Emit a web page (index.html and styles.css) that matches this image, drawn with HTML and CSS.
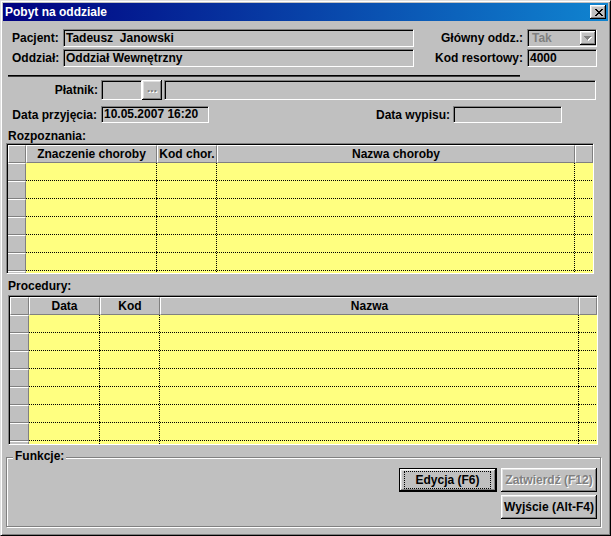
FILE: index.html
```html
<!DOCTYPE html>
<html lang="pl">
<head>
<meta charset="utf-8">
<title>Pobyt na oddziale</title>
<link rel="stylesheet" href="styles.css">
</head>
<body>
<div class="window">
  <div class="titlebar">
    <span class="title">Pobyt na oddziale</span>
    <span class="close-btn"><svg width="8" height="7" viewBox="0 0 8 7" shape-rendering="crispEdges"><path fill="#000" d="M0 0h2v1H0zM6 0h2v1H6zM1 1h2v1H1zM5 1h2v1H5zM2 2h4v1H2zM3 3h2v1H3zM2 4h4v1H2zM1 5h2v1H1zM5 5h2v1H5zM0 6h2v1H0zM6 6h2v1H6z"/></svg></span>
  </div>

  <div class="top">
    <span class="lbl">Pacjent:</span>
    <div class="field">Tadeusz  Janowski</div>
    <span class="lbl right">Główny oddz.:</span>
    <div class="combo">
      <span class="combo-text">Tak</span>
      <span class="combo-btn"><svg width="8" height="5" viewBox="0 0 8 5" shape-rendering="crispEdges"><path fill="#fff" d="M1 1h7v1H1zM2 2h5v1H2zM3 3h3v1H3zM4 4h1v1H4z"/><path fill="#808080" d="M0 0h7v1H0zM1 1h5v1H1zM2 2h3v1H2zM3 3h1v1H3z"/></svg></span>
    </div>
    <span class="lbl">Oddział:</span>
    <div class="field">Oddział Wewnętrzny</div>
    <span class="lbl right">Kod resortowy:</span>
    <div class="field">4000</div>
  </div>

  <div class="sep"></div>

  <div class="row payer">
    <span class="lbl col-lbl">Płatnik:</span>
    <div class="field f-code"></div>
    <span class="btn btn-dots"><span class="dis">...</span></span>
    <div class="field f-name"></div>
  </div>

  <div class="row dates">
    <span class="lbl col-lbl date-lbl">Data przyjęcia:</span>
    <div class="field f-date">10.05.2007 16:20</div>
    <span class="lbl out-lbl">Data wypisu:</span>
    <div class="field f-date2"></div>
  </div>

  <div class="section-lbl">Rozpoznania:</div>
  <div class="grid g1">
    <div class="grid-in g1-cols">
      <div class="h"></div><div class="h">Znaczenie choroby</div><div class="h">Kod chor.</div><div class="h">Nazwa choroby</div><div class="h"></div>
      <div class="ind"></div><div class="c"></div><div class="c"></div><div class="c"></div><div class="c last"></div>
      <div class="ind"></div><div class="c"></div><div class="c"></div><div class="c"></div><div class="c last"></div>
      <div class="ind"></div><div class="c"></div><div class="c"></div><div class="c"></div><div class="c last"></div>
      <div class="ind"></div><div class="c"></div><div class="c"></div><div class="c"></div><div class="c last"></div>
      <div class="ind"></div><div class="c"></div><div class="c"></div><div class="c"></div><div class="c last"></div>
      <div class="ind"></div><div class="c"></div><div class="c"></div><div class="c"></div><div class="c last"></div>
      <div class="ind"></div><div class="c"></div><div class="c"></div><div class="c"></div><div class="c last"></div>
    </div>
  </div>

  <div class="section-lbl s2">Procedury:</div>
  <div class="grid g2">
    <div class="grid-in g2-cols">
      <div class="h"></div><div class="h">Data</div><div class="h">Kod</div><div class="h">Nazwa</div><div class="h"></div>
      <div class="ind"></div><div class="c"></div><div class="c"></div><div class="c"></div><div class="c last"></div>
      <div class="ind"></div><div class="c"></div><div class="c"></div><div class="c"></div><div class="c last"></div>
      <div class="ind"></div><div class="c"></div><div class="c"></div><div class="c"></div><div class="c last"></div>
      <div class="ind"></div><div class="c"></div><div class="c"></div><div class="c"></div><div class="c last"></div>
      <div class="ind"></div><div class="c"></div><div class="c"></div><div class="c"></div><div class="c last"></div>
      <div class="ind"></div><div class="c"></div><div class="c"></div><div class="c"></div><div class="c last"></div>
      <div class="ind"></div><div class="c"></div><div class="c"></div><div class="c"></div><div class="c last"></div>
      <div class="ind"></div><div class="c"></div><div class="c"></div><div class="c"></div><div class="c last"></div>
    </div>
  </div>

  <div class="group">
    <span class="group-title">Funkcje:</span>
    <div class="buttons">
      <span class="btn btn-default"><span class="focus">Edycja (F6)</span></span>
      <span class="btn"><span class="dis">Zatwierdź (F12)</span></span>
      <span class="btn btn-exit">Wyjście (Alt-F4)</span>
    </div>
  </div>
</div>
</body>
</html>
```

FILE: styles.css
```css
* { box-sizing: border-box; }

html, body {
  margin: 0;
  padding: 0;
}

body {
  width: 611px;
  height: 536px;
  overflow: hidden;
  background: #c0c0c0;
  font-family: "Liberation Sans", Arial, sans-serif;
  font-size: 12px;
  font-weight: bold;
  color: #000;
}

.window {
  width: 611px;
  height: 536px;
  border: 1px solid;
  border-color: #dfdfdf #000 #000 #dfdfdf;
  box-shadow: inset 1px 1px #fff, inset -1px -1px #808080;
  padding: 2px;
  background: #c0c0c0;
}

.titlebar {
  height: 18px;
  display: flex;
  align-items: center;
  justify-content: space-between;
  padding: 0 2px 0 2px;
  background: linear-gradient(90deg, #000080, #1084d0);
  color: #fff;
}

.title {
  line-height: 18px;
}

.close-btn {
  width: 16px;
  height: 14px;
  display: flex;
  align-items: center;
  justify-content: center;
  padding-left: 1px;
  background: #c0c0c0;
  box-shadow: inset -1px -1px #000, inset 1px 1px #fff, inset -2px -2px #808080, inset 2px 2px #dfdfdf;
}

.close-btn svg { display: block; }

/* top block */
.top {
  display: grid;
  grid-template-columns: 51px 351px 113px 70px;
  grid-template-rows: 18px 18px;
  row-gap: 2px;
  align-items: center;
  margin: 8px 0 0 9px;
}

.lbl {
  white-space: nowrap;
  line-height: 14px;
}

.lbl.right {
  text-align: right;
  padding-right: 4px;
}

.field {
  height: 18px;
  background: #c0c0c0;
  border: 1px solid;
  border-color: #808080 #fff #fff #808080;
  box-shadow: inset 1px 1px #000;
  padding: 0 0 0 2px;
  line-height: 16px;
  white-space: pre;
  overflow: hidden;
}

.combo {
  height: 18px;
  display: flex;
  align-items: stretch;
  border: 1px solid;
  border-color: #808080 #fff #fff #808080;
  box-shadow: inset 1px 1px #000;
  padding: 1px 1px 1px 1px;
}

.combo-text {
  flex: 1;
  color: #808080;
  padding-left: 3px;
  line-height: 14px;
}

.combo-btn {
  width: 16px;
  margin: 0 -1px 0 0;
  display: flex;
  align-items: center;
  justify-content: center;
  padding-top: 1px;
  background: #c0c0c0;
  box-shadow: inset -1px -1px #000, inset 1px 1px #fff, inset -2px -2px #808080, inset 2px 2px #dfdfdf;
}

.combo-btn svg { display: block; }

.sep {
  margin: 8px 0 0 5px;
  width: 512px;
  height: 2px;
  border-top: 1px solid #000;
  border-bottom: 1px solid #404040;
}

.row {
  display: flex;
  align-items: center;
}

.payer {
  height: 20px;
  margin-top: 3px;
}

.col-lbl {
  width: 95px;
  text-align: right;
}

.date-lbl {
  padding-right: 1px;
}

.f-code {
  margin-left: 3px;
  width: 41px;
  height: 20px;
}

.btn-dots {
  width: 20px;
  height: 20px;
  align-items: flex-end;
  padding-bottom: 4px;
}

.f-name {
  margin-left: 2px;
  width: 432px;
  height: 20px;
}

.dates {
  height: 17px;
  margin-top: 6px;
}

.f-date {
  margin-left: 3px;
  width: 108px;
  height: 17px;
  line-height: 15px;
}

.out-lbl {
  width: 241px;
  text-align: right;
}

.f-date2 {
  margin-left: 3px;
  width: 109px;
  height: 17px;
}

.section-lbl {
  margin: 6px 0 0 5px;
  height: 14px;
  line-height: 14px;
}

.section-lbl.s2 {
  margin-top: 5px;
}

/* grids */
.grid {
  border: 1px solid;
  border-color: #808080 #fff #fff #808080;
  overflow: hidden;
}

.g1 {
  margin-left: 3px;
  width: 588px;
  height: 131px;
}

.g2 {
  margin: 2px 0 0 5px;
  width: 590px;
  height: 150px;
}

.grid-in {
  height: 100%;
  border-top: 1px solid #000;
  border-left: 1px solid #000;
  background: #ffff80;
  display: grid;
  grid-auto-rows: 18px;
  overflow: hidden;
}

.g1-cols { grid-template-columns: 18px 131px 60px 358px 18px; }
.g2-cols { grid-template-columns: 19px 71px 60px 419px 18px; }

.h {
  background: #c0c0c0;
  border-top: 1px solid #fff;
  border-left: 1px solid #fff;
  border-right: 1px solid #808080;
  border-bottom: 1px solid #808080;
  text-align: center;
  line-height: 16px;
  white-space: nowrap;
  overflow: hidden;
}

.ind {
  background: #c0c0c0;
  border-top: 1px solid #fff;
  border-right: 1px solid #808080;
  border-bottom: 1px solid #808080;
}

.c {
  background:
    linear-gradient(90deg, #000 50%, transparent 50%) left bottom / 2px 1px repeat-x,
    linear-gradient(180deg, #000 50%, transparent 50%) right top / 1px 2px repeat-y;
}

.c.last {
  background: linear-gradient(90deg, #000 50%, transparent 50%) left bottom / 2px 1px repeat-x;
}

/* group box */
.group {
  position: relative;
  margin: 12px 0 0 3px;
  width: 595px;
  height: 70px;
  border: 1px solid #808080;
  box-shadow: 1px 1px 0 #fff, inset 1px 1px 0 #fff;
  padding: 10px 3px 0 0;
}

.group-title {
  position: absolute;
  left: 6px;
  top: -9px;
  padding: 0 2px;
  line-height: 14px;
  background: #c0c0c0;
}

.buttons {
  display: grid;
  grid-template-columns: 98px 96px;
  grid-template-rows: 24px 24px;
  column-gap: 4px;
  row-gap: 3px;
  justify-content: end;
}

.btn {
  display: flex;
  align-items: center;
  justify-content: center;
  background: #c0c0c0;
  box-shadow: inset -1px -1px #000, inset 1px 1px #fff, inset -2px -2px #808080, inset 2px 2px #dfdfdf;
  white-space: nowrap;
}

.btn-default {
  border: 1px solid #000;
  align-items: stretch;
  justify-content: stretch;
  padding: 2px 5px 2px 4px;
}

.focus {
  flex: 1;
  display: flex;
  align-items: center;
  justify-content: center;
  border: 1px dotted #000;
}

.btn-exit {
  grid-column: 2;
}

.dis {
  color: #808080;
  text-shadow: 1px 1px 0 #fff;
}
```
